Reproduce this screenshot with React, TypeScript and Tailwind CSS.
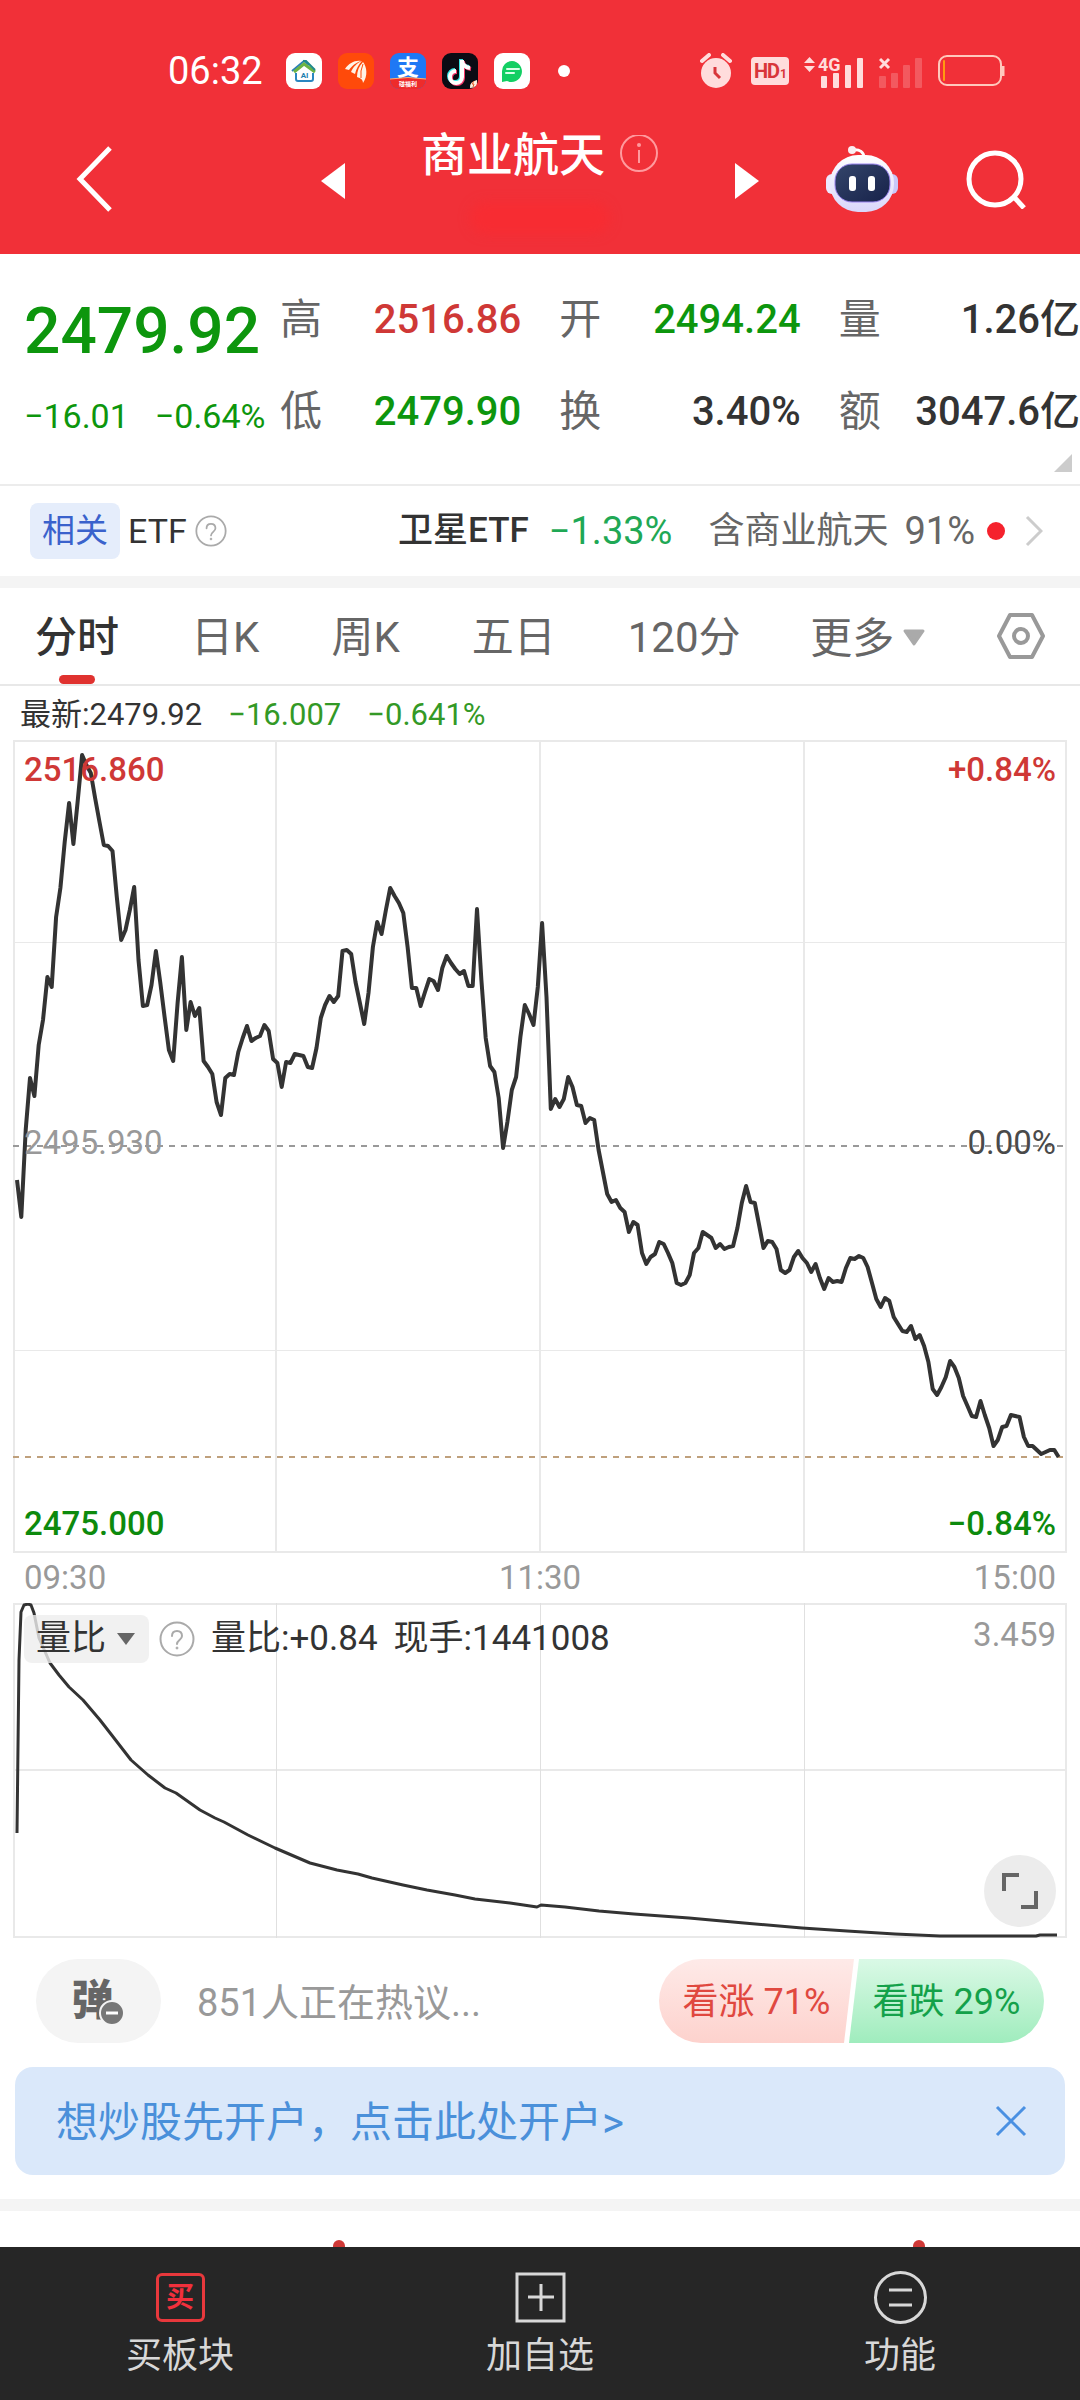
import type { ReactNode } from 'react';
import clsx from 'clsx';

// one value per trading minute, 09:30 - 15:00, measured down from the chart top
const PRICE_SERIES = [
  440, 477, 390, 338, 356, 305, 280, 237, 247, 177, 148, 102, 63, 104, 60, 15,
  25, 33, 58, 82, 105, 106, 111, 157, 200, 190, 170, 147, 220, 266, 265, 245,
  211, 242, 277, 310, 321, 263, 217, 290, 262, 276, 268, 321, 327, 334, 362,
  375, 338, 334, 335, 312, 298, 286, 301, 298, 296, 285, 291, 319, 323, 347,
  322, 323, 314, 315, 316, 327, 328, 308, 278, 265, 256, 262, 256, 211, 210,
  214, 242, 263, 284, 253, 207, 182, 194, 170, 148, 156, 163, 173, 207, 248,
  248, 266, 252, 239, 241, 250, 228, 216, 223, 229, 234, 231, 246, 246, 169,
  240, 298, 326, 332, 358, 408, 382, 350, 337, 297, 265, 274, 285, 247, 183,
  257, 369, 359, 367, 359, 337, 347, 365, 366, 383, 378, 380, 410, 432, 454,
  462, 460, 468, 472, 492, 482, 485, 513, 524, 517, 514, 502, 504, 513, 523,
  543, 545, 543, 535, 513, 508, 492, 495, 498, 508, 504, 509, 507, 506, 488,
  463, 446, 462, 463, 485, 508, 501, 502, 509, 530, 533, 530, 517, 511, 518,
  523, 532, 524, 538, 549, 538, 542, 541, 542, 528, 518, 519, 516, 518, 527,
  543, 559, 567, 558, 561, 577, 584, 591, 592, 586, 599, 595, 606, 622, 649,
  655, 647, 637, 621, 627, 638, 656, 666, 676, 677, 661, 675, 688, 706, 700,
  687, 686, 675, 676, 677, 697, 706, 706, 710, 714, 712, 710, 710, 717,
];

const RATIO_POINTS =
  '4,230 6,57 8,9 11,2 15,1 18,2 21,10 26,35 37,60 46,72 56,84 70,97 87,117 101,135 118,157 135,172 152,185 163,190 187,207 202,215 211,219 235,232 262,245 297,260 324,267 345,271 359,275 390,282 414,287 442,292 462,296 497,300 524,304 528,302 552,304 586,308 621,311 676,315 731,320 789,325 834,328 882,331 927,333 1023,333 1027,332 1044,332';

const pricePoints = PRICE_SERIES.map(
  (y, minute) => `${(4 + minute * 4.34).toFixed(1)},${y}`
).join(' ');

const QUOTES = [
  { label: '高', value: '2516.86', tone: 'text-[#cf3836]' },
  { label: '开', value: '2494.24', tone: 'text-[#0d960d]' },
  { label: '量', value: '1.26亿', tone: 'text-[#333]' },
  { label: '低', value: '2479.90', tone: 'text-[#0d960d]' },
  { label: '换', value: '3.40%', tone: 'text-[#333]' },
  { label: '额', value: '3047.6亿', tone: 'text-[#333]' },
];

const TABS = ['分时', '日K', '周K', '五日', '120分'];

const AppBadges = () => (
  <div className="flex gap-4">
    <svg className="size-9" viewBox="0 0 36 36">
      <rect width="36" height="36" rx="9" fill="#fff" />
      <path d="M6 18 18 8l5 4" fill="none" stroke="#2a7fb8" strokeWidth="2" />
      <path d="M8 19 18 11l11 8" fill="none" stroke="#6bb344" strokeWidth="3" />
      <path d="M17 8h3l9 9" fill="none" stroke="#1f8a8a" strokeWidth="2" />
      <path
        d="M10 20v6q0 2 2 2h13q2 0 2-2v-6"
        fill="none"
        stroke="#2a86c0"
        strokeWidth="2"
      />
      <text
        x="18.500"
        y="25"
        fontSize="8"
        fontWeight="700"
        textAnchor="middle"
        fill="#1f7fb0"
      >
        AI
      </text>
    </svg>
    <svg className="size-9" viewBox="0 0 36 36">
      <rect width="36" height="36" rx="9" fill="#ff4a0a" />
      <g fill="#fff3e6">
        <path d="M7 16C11 10 17 7 23 8c-6 2-9 5-12 9z" />
        <path d="M13 19c2-5 6-9 11-11-3 3-6 8-7 13z" />
        <path d="M19 24c0-6 2-11 6-15 4 5 5 14 0 21 0-3-2-5-6-6z" />
      </g>
      <path d="M25 11q-3 7-2 14" fill="none" stroke="#ff4a0a" />
    </svg>
    <svg className="size-9" viewBox="0 0 36 36">
      <clipPath id="pay">
        <rect width="36" height="36" rx="9" />
      </clipPath>
      <g clipPath="url(#pay)">
        <rect width="36" height="36" fill="#1f78f5" />
        <path d="M0 26q18-3 36 0v10H0z" fill="#ee2b2b" />
        <path d="M0 26q18-3 36 0" fill="none" stroke="#ffb070" strokeWidth="1" />
        <text
          x="18"
          y="22"
          fontSize="22"
          fontWeight="700"
          textAnchor="middle"
          fill="#fff"
        >
          支
        </text>
        <text
          x="18"
          y="33"
          fontSize="6"
          fontWeight="700"
          textAnchor="middle"
          fill="#fff"
        >
          碰福利
        </text>
      </g>
    </svg>
    <svg className="size-9" viewBox="0 0 36 36">
      <rect width="36" height="36" rx="9" fill="#0b0b14" />
      <g fill="none" strokeWidth="4">
        <path d="M19 6v17a6 6 0 1 1-6-6M19 7q1 6 8 7" stroke="#35e6e6" />
        <path d="M21 8v17a6 6 0 1 1-6-6M21 9q1 6 8 7" stroke="#f5376a" />
        <path d="M20 7v17a6 6 0 1 1-6-6M20 8q1 6 8 7" stroke="#fff" />
      </g>
      <path d="M28 35q-1-6 7-8 1 8-7 8z" fill="#fff0e0" />
      <path d="M32 28l-2 3h2l-1 3" fill="none" stroke="#e05a2a" />
    </svg>
    <svg className="size-9" viewBox="0 0 36 36">
      <rect width="36" height="36" rx="9" fill="#fff" />
      <path
        d="M18 8a10.500 10.500 0 1 1-5 20l-5 1V18A10 10 0 0 1 18 8z"
        fill="#12cf63"
      />
      <path
        d="M13 16h12M12 20h8"
        stroke="#d8ffe8"
        strokeWidth="2"
        strokeLinecap="round"
      />
    </svg>
  </div>
);

const StatusIcons = () => (
  <div className="flex items-center gap-[15px]">
    <svg className="mr-1 h-9 w-8" viewBox="0 0 32 36">
      <circle cx="16" cy="20" r="15" fill="#ffdcdc" />
      <path
        d="M2 8l7-6M30 8l-7-6"
        stroke="#ffdcdc"
        strokeWidth="4"
        strokeLinecap="round"
      />
      <path d="M15 14v6l5 5" fill="none" stroke="#d8353a" strokeWidth="3" />
    </svg>
    <svg className="h-7 w-[38px]" viewBox="0 0 38 28" fontWeight="700">
      <rect width="38" height="28" rx="4" fill="#ffdcdc" />
      <text x="3" y="21" fontSize="20" fill="#d8353a">
        H
      </text>
      <text x="16" y="21" fontSize="20" fill="#d8353a">
        D
      </text>
      <text x="29" y="21" fontSize="12" fill="#d8353a">
        1
      </text>
    </svg>
    <svg className="h-9 w-[60px]" viewBox="0 -3 60 36" fill="#ffdcdc">
      <path d="M0 7l5.500-6 5.500 6zM0 10h11l-5.500 6z" />
      <text x="14" y="15" fontSize="18" fontWeight="700">
        4G
      </text>
      <rect x="17" y="20" width="6" height="12" rx="1" />
      <rect x="29" y="17" width="6" height="15" rx="1" />
      <rect x="41" y="9" width="6" height="23" rx="1" />
      <rect x="53" y="2" width="6" height="30" rx="1" />
    </svg>
    <svg className="h-9 w-11" viewBox="0 -3 44 36">
      <path d="M1 3l9 9M10 3l-9 9" stroke="#ffdcdc" strokeWidth="3" />
      <g fill="#fff" fillOpacity=".2">
        <rect x="0" y="20" width="7" height="12" rx="1" />
        <rect x="12" y="17" width="7" height="15" rx="1" />
        <rect x="24" y="9" width="7" height="23" rx="1" />
        <rect x="36" y="2" width="7" height="30" rx="1" />
      </g>
    </svg>
    <svg className="h-8 w-[67px]" viewBox="0 0 67 32">
      <rect
        x="1"
        y="1"
        width="62"
        height="29"
        rx="8"
        fill="none"
        stroke="#ffc8bc"
        strokeWidth="2"
      />
      <rect x="5" y="5" width="2" height="21" rx="1" fill="#ff9a10" />
      <path d="M65 11v10" stroke="#ffc8bc" strokeWidth="3" />
    </svg>
  </div>
);

const RobotIcon = () => (
  <svg className="h-[68px] w-[72px]" viewBox="0 0 72 68">
    <defs>
      <linearGradient id="shell" x1="0" y1="0" x2="0" y2="1">
        <stop offset="0" stopColor="#fff" />
        <stop offset="1" stopColor="#d9d6fb" />
      </linearGradient>
      <linearGradient id="visor" x1="0" y1="0" x2="1" y2="1">
        <stop offset="0" stopColor="#34456a" />
        <stop offset="1" stopColor="#17224a" />
      </linearGradient>
    </defs>
    <path
      d="M26 5c8-1 12 2 12 8"
      fill="none"
      stroke="#fff"
      strokeWidth="3"
      strokeLinecap="round"
    />
    <circle cx="26" cy="5" r="4" fill="#fbeef2" />
    <rect x="0" y="29" width="12" height="20" rx="6" fill="#ece9ff" />
    <rect x="60" y="29" width="12" height="20" rx="6" fill="#c9c8fa" />
    <rect x="4" y="10" width="64" height="57" rx="28" fill="url(#shell)" />
    <rect
      x="9"
      y="19"
      width="55"
      height="38"
      rx="17"
      fill="url(#visor)"
      stroke="#9b84f0"
      strokeWidth="1"
    />
    <rect x="23" y="31" width="7" height="15" rx="3" fill="#fff" />
    <rect x="42" y="31" width="7" height="15" rx="3" fill="#fff" />
  </svg>
);

const Header = () => (
  <header className="bg-[#f13038] text-white">
    <div className="flex h-[104px] items-center pt-[38px] pr-[75px] pl-[168px]">
      <time className="mr-[23px] text-[38px] leading-9">06:32</time>
      <AppBadges />
      <span className="ml-7 size-3 rounded-full bg-white" />
      <div className="ml-auto">
        <StatusIcons />
      </div>
    </div>
    <div className="grid h-[150px] grid-cols-[1fr_438px_1fr] items-center">
      <button aria-label="返回" className="ml-[76px] w-10">
        <svg className="h-[68px] w-10" viewBox="0 0 40 68">
          <path d="M34 3 4 34l30 31" fill="none" stroke="#fff" strokeWidth="5" />
        </svg>
      </button>
      <div className="flex items-center justify-between pt-1">
        <button aria-label="上一个">
          <svg className="h-9 w-6" viewBox="0 0 24 36">
            <path d="M24 0v36L0 18z" fill="#fff" />
          </svg>
        </button>
        <div className="flex flex-col items-center">
          <div className="flex items-center gap-[14px]">
            <h1 className="text-[46px] leading-[54px] font-medium">商业航天</h1>
            <svg className="size-10" viewBox="0 0 40 40" fill="none">
              <circle cx="20" cy="18" r="18" stroke="#ff9a9e" strokeWidth="2" />
              <path d="M20 15v13" stroke="#ff9a9e" strokeWidth="2" />
              <circle cx="20" cy="10" r="2" fill="#ff9a9e" />
            </svg>
          </div>
          <div className="mt-5 h-8 w-[140px] rounded-full bg-[#fb2a2e]/60 blur-[6px]" />
        </div>
        <button aria-label="下一个">
          <svg className="h-9 w-6" viewBox="0 0 24 36">
            <path d="M0 0v36l24-18z" fill="#fff" />
          </svg>
        </button>
      </div>
      <div className="flex items-center justify-end gap-[68px] pr-[54px]">
        <button aria-label="助手">
          <RobotIcon />
        </button>
        <button aria-label="搜索">
          <svg className="h-[60px] w-[60px]" viewBox="0 0 60 60" fill="none">
            <circle cx="29" cy="30" r="26" stroke="#fff" strokeWidth="5" />
            <path d="M48 48l10 11" stroke="#fff" strokeWidth="5" />
          </svg>
        </button>
      </div>
    </div>
  </header>
);

const HelpIcon = ({ className }: { className?: string }) => (
  <svg className={className} viewBox="0 0 36 36" fill="none" stroke="#aaa">
    <circle cx="18" cy="18" r="16.500" strokeWidth="2" />
    <path
      d="M13 15c0-3 2-5 5-5s5 2 5 5c0 4-5 4-5 8"
      strokeWidth="2"
      strokeLinecap="round"
    />
    <circle cx="18" cy="27" r="1" fill="#aaa" />
  </svg>
);

const QuotePanel = () => (
  <section className="relative flex h-[232px] border-b-2 border-[#ececec] pt-[20px]">
    <div className="w-[280px] shrink-0 pl-6 whitespace-nowrap text-[#0d960d]">
      <p className="mt-4 text-[64px] leading-[84px] font-medium">2479.92</p>
      <p className="mt-5 flex gap-[26px] text-[34px] leading-11">
        <span>−16.01</span>
        <span>−0.64%</span>
      </p>
    </div>
    <dl className="grid flex-1 auto-rows-[92px] grid-cols-3 gap-x-[38px]">
      {QUOTES.map(({ label, value, tone }) => (
        <div
          key={label}
          className="flex items-center justify-between whitespace-nowrap"
        >
          <dt className="text-[42px] leading-[60px] text-[#666]">{label}</dt>
          <dd className={clsx('text-[40px] leading-[60px] font-medium', tone)}>
            {value}
          </dd>
        </div>
      ))}
    </dl>
    <svg
      className="absolute right-2 bottom-3 size-[18px]"
      viewBox="0 0 18 18"
      fill="#ccc"
    >
      <path d="M18 0v18H0z" />
    </svg>
  </section>
);

const RelatedEtf = () => (
  <a
    href="#etf"
    className="flex h-[90px] items-center pr-[37px] pl-[30px] whitespace-nowrap"
  >
    <span className="rounded-lg bg-[#e5edfb] px-3 text-[33px] leading-14 text-[#3a62cc]">
      相关
    </span>
    <span className="ml-2 text-[34px] leading-14 text-[#333]">ETF</span>
    <HelpIcon className="ml-2 size-8" />
    <span className="ml-auto text-[35px] leading-14 font-medium text-[#333]">
      卫星ETF
    </span>
    <span className="ml-5 text-[38px] leading-14 text-[#1fa855]">−1.33%</span>
    <span className="ml-9 text-[36px] leading-14 text-[#666]">含商业航天</span>
    <span className="ml-4 text-[38px] leading-14 text-[#666]">91%</span>
    <span className="ml-3 size-[18px] rounded-full bg-[#f5222d]" />
    <svg className="ml-5 h-8 w-[18px]" viewBox="0 0 18 32" fill="none">
      <path d="M2 2l14 14L2 30" stroke="#ccc" strokeWidth="3" />
    </svg>
  </a>
);

const PeriodTabs = () => (
  <nav className="flex h-[98px] items-center justify-between border-b-2 border-[#e8e8e8] pr-[34px] pl-[35px] text-[42px] whitespace-nowrap text-[#666]">
    <div className="flex h-full items-center gap-[72px]">
      {TABS.map((tab, i) => (
        <button
          key={tab}
          className={clsx(
            'relative h-full pt-1 leading-[60px]',
            i === 0 && 'font-medium text-[#333]'
          )}
        >
          {tab}
          {i === 0 && (
            <span className="absolute bottom-0 left-1/2 h-[9px] w-9 -translate-x-1/2 rounded-full bg-[#e0322f]" />
          )}
        </button>
      ))}
    </div>
    <button className="flex h-full items-center gap-2 pt-1">
      更多
      <svg className="h-[18px] w-6" viewBox="0 0 24 18">
        <path
          d="M3 2h18l-9 13z"
          fill="#aaa"
          stroke="#aaa"
          strokeWidth="3"
          strokeLinejoin="round"
        />
      </svg>
    </button>
    <button aria-label="设置">
      <svg className="h-12 w-[50px]" viewBox="0 0 50 48" fill="none">
        <path
          d="M14 3h22l11 21-11 21H14L3 24z"
          stroke="#999"
          strokeWidth="4"
          strokeLinejoin="round"
        />
        <circle cx="25" cy="24" r="7" stroke="#999" strokeWidth="4" />
      </svg>
    </button>
  </nav>
);

const PriceChart = () => (
  <section className="px-[13px]">
    <div className="relative h-[813px] text-[33px] leading-10">
      <svg
        className="h-full w-full"
        viewBox="0 0 1054 813"
        preserveAspectRatio="none"
        fill="none"
      >
        <g stroke="#e9e9e9" strokeWidth="2">
          <path d="M1 1h1052v811H1z" />
          <path d="M263 0v813M527 0v813M791 0v813" />
          <path d="M0 202.500h1054M0 610.500h1054" strokeWidth="1" />
        </g>
        <path
          d="M0 406h1050"
          stroke="#999"
          strokeWidth="2"
          strokeDasharray="6 6"
        />
        <path
          d="M0 717h1050"
          stroke="#bfa07c"
          strokeWidth="2"
          strokeDasharray="6 6"
        />
        <polyline
          points={pricePoints}
          stroke="#333"
          strokeWidth="4"
          strokeLinejoin="round"
        />
      </svg>
      <div className="absolute inset-0 flex flex-col justify-between px-[11px] pt-[10px] pb-[9px]">
        <p className="flex justify-between font-medium text-[#cf3836]">
          <span>2516.860</span>
          <span>+0.84%</span>
        </p>
        <p className="flex justify-between pb-2 text-[#999]">
          <span>2495.930</span>
          <span className="text-[#4a4a4a]">0.00%</span>
        </p>
        <p className="flex justify-between font-medium text-[#0d8a0d]">
          <span>2475.000</span>
          <span>−0.84%</span>
        </p>
      </div>
    </div>
    <p className="flex h-[50px] items-center justify-between px-[11px] text-[33px] text-[#999]">
      <span>09:30</span>
      <span>11:30</span>
      <span>15:00</span>
    </p>
  </section>
);

const RatioChart = () => (
  <section className="px-[13px]">
    <div className="relative h-[335px]">
      <svg
        className="h-full w-full"
        viewBox="0 0 1054 335"
        preserveAspectRatio="none"
        fill="none"
      >
        <g stroke="#e9e9e9" strokeWidth="2">
          <path d="M1 1h1052v333H1z" />
          <path d="M0 167h1054" />
          <path
            d="M263.500 0v335M527.500 0v335M791.500 0v335"
            stroke="#e0e0e0"
            strokeWidth="1"
          />
        </g>
        <polyline
          points={RATIO_POINTS}
          stroke="#333"
          strokeWidth="3"
          strokeLinejoin="round"
        />
      </svg>
      <div className="absolute inset-x-[11px] top-3 flex items-center text-[35px] leading-12 whitespace-nowrap text-[#333]">
        <label className="relative">
          <select
            aria-label="指标"
            className="h-12 w-[125px] appearance-none rounded-lg bg-[#eee]/80 pl-3"
          >
            <option>量比</option>
          </select>
          <svg
            className="pointer-events-none absolute top-[18px] right-[14px] h-3 w-[18px]"
            viewBox="0 0 18 12"
          >
            <path d="M0 0h18L9 12z" fill="#666" />
          </svg>
        </label>
        <HelpIcon className="ml-[10px] size-9" />
        <span className="ml-4">量比:+0.84</span>
        <span className="ml-4">现手:1441008</span>
        <span className="ml-auto self-start text-[33px] leading-10 text-[#999]">
          3.459
        </span>
      </div>
      <button
        aria-label="全屏"
        className="absolute right-[11px] bottom-[11px] flex size-[72px] items-center justify-center rounded-full bg-[#ececec]"
      >
        <svg className="size-10" viewBox="0 0 40 40" fill="none">
          <path
            d="M4 20V4h15M36 20v16H21"
            stroke="#666"
            strokeWidth="4"
          />
        </svg>
      </button>
    </div>
  </section>
);

const Discussion = () => (
  <section className="flex h-[129px] items-center pr-9 pb-[3px] pl-9 whitespace-nowrap">
    <button
      aria-label="弹幕"
      className="relative h-[84px] w-[125px] rounded-full bg-[#f4f4f4] pr-3 text-[42px] leading-[78px] font-black text-[#666]"
    >
      弹
      <svg
        className="absolute top-[41px] left-[63px] size-[26px]"
        viewBox="0 0 26 26"
      >
        <circle cx="13" cy="13" r="12" fill="#777" stroke="#f4f4f4" strokeWidth="2" />
        <path d="M7 13h12" stroke="#fff" strokeWidth="3" />
      </svg>
    </button>
    <a href="#talk" className="ml-9 pt-1 text-[38px] leading-[60px] text-[#999]">
      851人正在热议...
    </a>
    <button className="ml-auto h-[84px] w-[195px] rounded-l-full bg-linear-to-b from-[#feeae8] to-[#fdd2cd] pt-[2px] text-[36px] text-[#e0483f] [clip-path:polygon(0_0,100%_0,calc(100%-10px)_100%,0_100%)]">
      看涨 71%
    </button>
    <button className="-ml-[5px] h-[84px] w-[195px] rounded-r-full bg-linear-to-b from-[#daf9e6] to-[#9fecbd] pt-[2px] text-[36px] text-[#14a14a] [clip-path:polygon(10px_0,100%_0,100%_100%,0_100%)]">
      看跌 29%
    </button>
  </section>
);

const OpenAccountBanner = () => (
  <aside className="mx-[15px] flex h-[108px] items-center justify-between rounded-[18px] bg-[#dae8fa] pr-[38px] pl-[41px]">
    <a href="#open" className="pt-1 text-[42px] leading-[60px] text-[#4a90da]">
      想炒股先开户，点击此处开户&gt;
    </a>
    <button aria-label="关闭">
      <svg className="size-8" viewBox="0 0 32 32">
        <path d="M2 2l28 28M30 2L2 30" stroke="#4a90e2" strokeWidth="3" />
      </svg>
    </button>
  </aside>
);

type NavItemProps = {
  label: string;
  children: ReactNode;
};

const NavItem = ({ label, children }: NavItemProps) => (
  <button className="flex flex-1 flex-col items-center pt-6">
    {children}
    <span className="mt-[6px] text-[36px] leading-[52px]">{label}</span>
  </button>
);

const BottomNav = () => (
  <nav className="flex h-[153px] bg-[#262626] text-[#d8d8d8]">
    <NavItem label="买板块">
      <span className="m-[2px] flex size-[49px] items-center justify-center rounded-md border-3 border-[#e8383c] text-[28px] leading-7 font-bold text-[#f2303c]">
        买
      </span>
    </NavItem>
    <NavItem label="加自选">
      <svg className="size-[53px]" viewBox="0 0 53 53" fill="none">
        <path
          d="M3 3h47v47H3zM27 13v27M14 26h26"
          stroke="#d8d8d8"
          strokeWidth="3"
        />
      </svg>
    </NavItem>
    <NavItem label="功能">
      <svg className="size-[53px]" viewBox="0 0 53 53" fill="none">
        <circle cx="26.500" cy="26.500" r="25" stroke="#d8d8d8" strokeWidth="3" />
        <path d="M15 19h23M15 34h23" stroke="#d8d8d8" strokeWidth="3" />
      </svg>
    </NavItem>
  </nav>
);

export default function App() {
  return (
    <div className="flex min-h-screen flex-col bg-white font-['Roboto','Noto_Sans_CJK_SC',sans-serif]">
      <Header />
      <main className="flex-1">
        <QuotePanel />
        <RelatedEtf />
        <div className="h-3 bg-[#f4f4f4]" />
        <PeriodTabs />
        <p className="flex h-[54px] items-center gap-[26px] pt-1 pl-5 text-[31px] whitespace-nowrap text-[#339926]">
          <span className="text-[#333]">最新:2479.92</span>
          <span>−16.007</span>
          <span>−0.641%</span>
        </p>
        <PriceChart />
        <RatioChart />
        <Discussion />
        <OpenAccountBanner />
        <div className="mt-6 h-3 bg-[#f4f4f4]" />
        <div className="flex h-9 justify-between overflow-hidden pt-[29px] pr-[155px] pl-[333px]">
          <span className="size-3 shrink-0 rounded-full bg-[#cf3836]" />
          <span className="size-3 shrink-0 rounded-full bg-[#cf3836]" />
        </div>
      </main>
      <BottomNav />
    </div>
  );
}
